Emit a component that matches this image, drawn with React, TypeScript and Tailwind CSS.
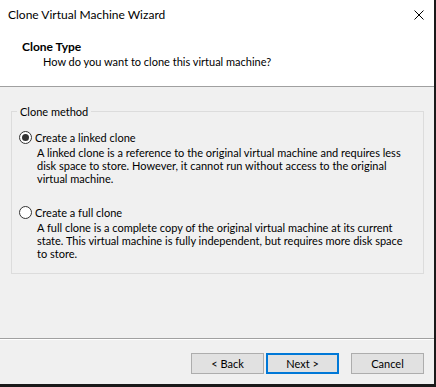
export default function App() {
  const Radio = ({ checked }: { checked: boolean }) => (
    <svg width="13" height="13" viewBox="0 0 13 13" className="shrink-0">
      <circle cx="6.5" cy="6.5" r="6" fill="#ffffff" stroke="#333333" strokeWidth="1" />
      {checked && <circle cx="6.5" cy="6.5" r="3.5" fill="#333333" />}
    </svg>
  );
  return (
    <div className="w-[436px] h-[387px] bg-[#1a1a1a] font-['Lato',sans-serif] text-[11px] text-black whitespace-nowrap">
      <div className="w-[434px] h-[384px] bg-[#f0f0f0] flex flex-col">
        <div className="bg-white h-[86px] flex flex-col shrink-0">
          <div className="h-[29px] flex items-center justify-between pl-[8px] pr-[10px]">
            <span className="leading-[15px] text-[12px]">Clone Virtual Machine Wizard</span>
            <svg width="10" height="10" viewBox="0 0 10 10">
              <path d="M0.5 0.5 L9.5 9.5 M9.5 0.5 L0.5 9.5" stroke="#000" strokeWidth="1" fill="none" />
            </svg>
          </div>
          <div className="pl-[22px] pt-[10px] leading-[15px]">
            <div className="font-bold text-[12px]">Clone Type</div>
            <div className="pl-[21px]">How do you want to clone this virtual machine?</div>
          </div>
        </div>
        <div className="h-px bg-[#a0a0a0] shrink-0" />
        <div className="flex-1 pl-[11px] pt-[18px]">
          <fieldset className="w-[413px] h-[169px] border border-[#dcdcdc]">
            <legend className="ml-[5px] px-[3px] leading-[13px]">Clone method</legend>
            <div className="flex flex-col pl-[7px] pt-[13px]">
              <div className="flex items-center gap-[3px] h-[13px]">
                <Radio checked={true} />
                <span className="leading-[13px]">Create a linked clone</span>
              </div>
              <div className="pl-[18px] pt-[2px] leading-[13px]">
                <div>A linked clone is a reference to the original virtual machine and requires less</div>
                <div>disk space to store. However, it cannot run without access to the original</div>
                <div>virtual machine.</div>
              </div>
              <div className="flex items-center gap-[3px] h-[13px] mt-[21px]">
                <Radio checked={false} />
                <span className="leading-[13px]">Create a full clone</span>
              </div>
              <div className="pl-[18px] pt-[2px] leading-[13px]">
                <div>A full clone is a complete copy of the original virtual machine at its current</div>
                <div>state. This virtual machine is fully independent, but requires more disk space</div>
                <div>to store.</div>
              </div>
            </div>
          </fieldset>
        </div>
        <div className="h-px bg-[#a0a0a0] shrink-0" />
        <div className="h-px bg-white shrink-0" />
        <div className="h-[44px] shrink-0 flex items-start justify-end pr-[10px] pt-[13px]">
          <button className="w-[73px] h-[21px] bg-[#e1e1e1] border border-[#adadad] leading-[13px]">&lt; Back</button>
          <button className="w-[73px] h-[21px] bg-[#e1e1e1] border-2 border-[#0078d7] ml-[2px] leading-[13px]">Next &gt;</button>
          <button className="w-[73px] h-[21px] bg-[#e1e1e1] border border-[#adadad] ml-[12px] leading-[13px]">Cancel</button>
        </div>
      </div>
    </div>
  );
}
